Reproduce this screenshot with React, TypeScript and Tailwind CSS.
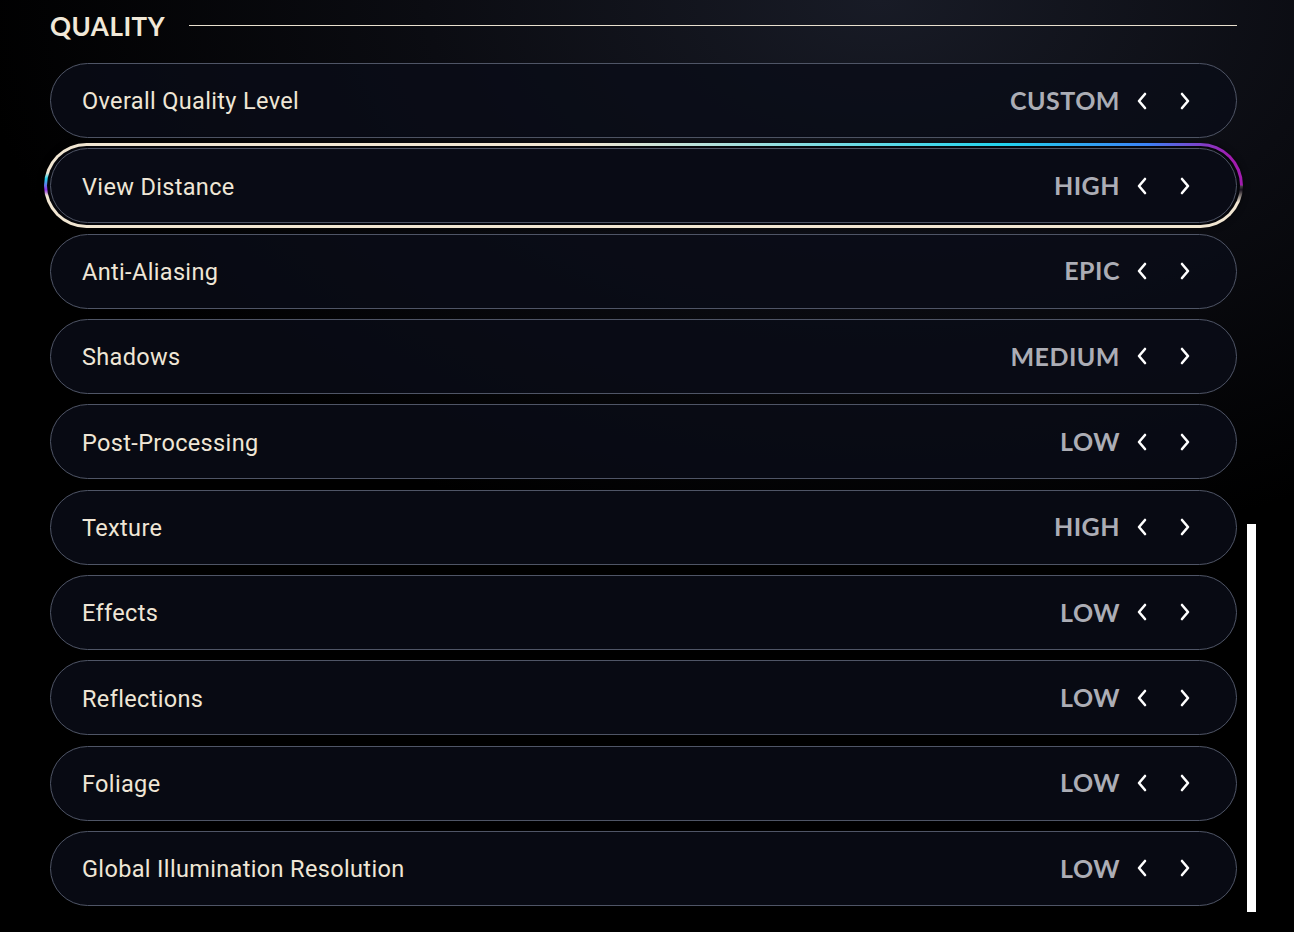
import React from "react";

const rows: { label: string; value: string; selected?: boolean }[] = [
  { label: "Overall Quality Level", value: "CUSTOM" },
  { label: "View Distance", value: "HIGH", selected: true },
  { label: "Anti-Aliasing", value: "EPIC" },
  { label: "Shadows", value: "MEDIUM" },
  { label: "Post-Processing", value: "LOW" },
  { label: "Texture", value: "HIGH" },
  { label: "Effects", value: "LOW" },
  { label: "Reflections", value: "LOW" },
  { label: "Foliage", value: "LOW" },
  { label: "Global Illumination Resolution", value: "LOW" },
];

function Chevron({ dir }: { dir: "left" | "right" }) {
  return (
    <svg width="14" height="18" viewBox="0 0 14 18" fill="none" className="block">
      <path
        d={dir === "left" ? "M10 2 L4 9 L10 16" : "M4 2 L10 9 L4 16"}
        stroke="#ffffff"
        strokeWidth="2.6"
        strokeLinecap="round"
        strokeLinejoin="round"
      />
    </svg>
  );
}

function RowInner({ label, value }: { label: string; value: string }) {
  return (
    <div className="flex h-[75px] items-center justify-between rounded-full border-[1.5px] border-[#4f5566] bg-[#0a0d18]/80 pl-[31px] pr-[44px]">
      <span className="mt-[3px] font-['Roboto',sans-serif] text-[23.5px] font-normal tracking-[0.35px] text-[#efe6d6]">
        {label}
      </span>
      <div className="flex items-center">
        <span className="font-['Lato',sans-serif] text-[25px] font-bold tracking-[0.5px] text-[#acadb5]">
          {value}
        </span>
        <div className="ml-[15px] flex items-center gap-[29px]">
          <Chevron dir="left" />
          <Chevron dir="right" />
        </div>
      </div>
    </div>
  );
}

export default function App() {
  return (
    <div className="relative h-[932px] w-[1294px] overflow-hidden bg-[radial-gradient(ellipse_70%_60%_at_68%_0%,#181b26_0%,#0b0c12_50%,#000000_100%)]">
      <div className="pl-[50px] pr-[57px]">
        <div className="flex h-[51px] items-center">
          <h2 className="font-['Lato',sans-serif] text-[26px] font-bold leading-none tracking-[0.5px] text-[#f1e8d8]">
            QUALITY
          </h2>
          <div className="ml-[24px] h-px flex-1 bg-[#e9e0cf]" />
        </div>
        <div className="mt-[12px] flex flex-col gap-[10.33px]">
          {rows.map((r) =>
            r.selected ? (
              <div
                key={r.label}
                className="-mx-[6px] -my-[5px] rounded-full p-[3px] [background:linear-gradient(to_right,rgba(241,230,210,0)_0%,rgba(241,230,210,0)_45%,#22d3ee_80%,#3b82f6_92%,#a21caf_99%)_top/100%_50%_no-repeat,linear-gradient(to_bottom,rgba(0,0,0,0)_35%,#22d3ee_42%,#9333ea_55%,rgba(0,0,0,0)_62%)_left/8px_100%_no-repeat,linear-gradient(to_bottom,rgba(0,0,0,0)_35%,#1a1420_55%,rgba(0,0,0,0)_70%)_right/12px_100%_no-repeat,#f1e6d2] shadow-[0_0_6px_rgba(0,0,0,0.6)]"
              >
                <div className="rounded-full bg-[#05060b] px-[3px] py-[2px]">
                  <RowInner label={r.label} value={r.value} />
                </div>
              </div>
            ) : (
              <RowInner key={r.label} label={r.label} value={r.value} />
            )
          )}
        </div>
      </div>
      <div className="absolute left-[1247px] top-[524px] h-[388px] w-[9px] bg-white" />
    </div>
  );
}
